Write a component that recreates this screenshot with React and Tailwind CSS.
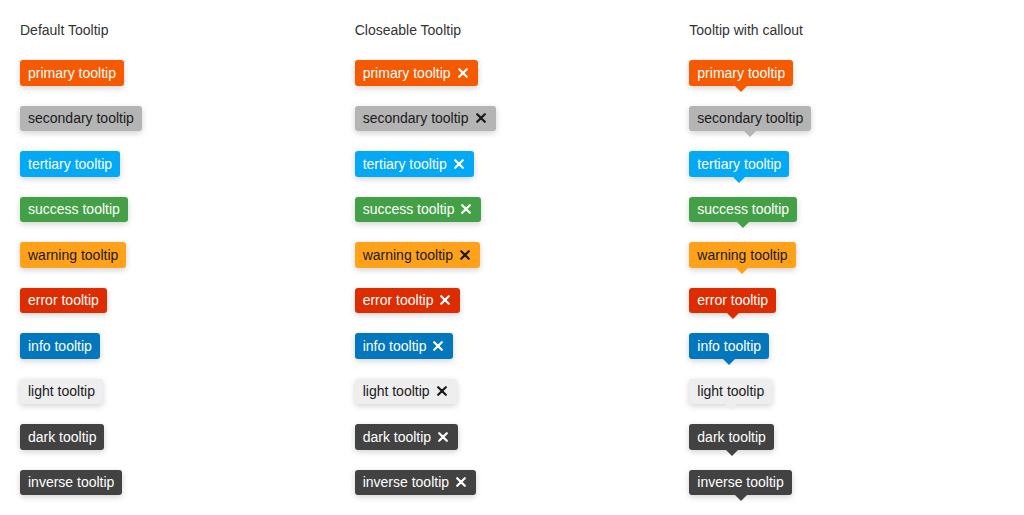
const variants = [
  { name: 'primary', bg: 'bg-[#f55a00]', text: 'text-white', arrow: 'border-t-[#f55a00]' },
  { name: 'secondary', bg: 'bg-[#b4b4b4]', text: 'text-[#1a1a1a]', arrow: 'border-t-[#b4b4b4]' },
  { name: 'tertiary', bg: 'bg-[#03a9f4]', text: 'text-white', arrow: 'border-t-[#03a9f4]' },
  { name: 'success', bg: 'bg-[#43a047]', text: 'text-white', arrow: 'border-t-[#43a047]' },
  { name: 'warning', bg: 'bg-[#ffa21a]', text: 'text-[#1a1a1a]', arrow: 'border-t-[#ffa21a]' },
  { name: 'error', bg: 'bg-[#dd2c00]', text: 'text-white', arrow: 'border-t-[#dd2c00]' },
  { name: 'info', bg: 'bg-[#0277bd]', text: 'text-white', arrow: 'border-t-[#0277bd]' },
  { name: 'light', bg: 'bg-[#eeeeee]', text: 'text-[#1a1a1a]', arrow: 'border-t-[#eeeeee]' },
  { name: 'dark', bg: 'bg-[#424242]', text: 'text-white', arrow: 'border-t-[#424242]' },
  { name: 'inverse', bg: 'bg-[#424242]', text: 'text-white', arrow: 'border-t-[#424242]' },
];

// small bold close cross
const CloseIcon = () => (
  <svg width="10" height="10" viewBox="0 0 10 10" className="ml-[7px] -mt-[1px] shrink-0">
    <path d="M1.2 1.2 L8.8 8.8 M8.8 1.2 L1.2 8.8" stroke="currentColor" strokeWidth="2.2" strokeLinecap="round" />
  </svg>
);

const Tooltip = ({ v, closeable, callout }) => (
  <div className="relative self-start">
    <div
      className={`flex items-center rounded-[3px] pl-2 pt-[4.5px] pb-[3.5px] text-sm leading-[17.5px] shadow-[0_2px_6px_rgba(0,0,0,0.18)] ${closeable ? 'pr-[10px]' : 'pr-2'} ${v.bg} ${v.text}`}
    >
      <span>{v.name} tooltip</span>
      {closeable && <CloseIcon />}
    </div>
    {callout && (
      <div
        className={`absolute left-1/2 top-full h-0 w-0 -translate-x-1/2 border-x-[6px] border-t-[6px] border-x-transparent ${v.arrow}`}
      />
    )}
  </div>
);

const Column = ({ title, closeable, callout }) => (
  <div className="flex flex-col">
    <h3 className="mb-5 text-sm leading-5 text-[#333333]">{title}</h3>
    <div className="flex flex-col gap-5">
      {variants.map((v) => (
        <Tooltip key={v.name} v={v} closeable={closeable} callout={callout} />
      ))}
    </div>
  </div>
);

const App = () => {
  return (
    <div
      className="grid min-h-[515px] grid-cols-3 bg-white pl-5 pt-5"
      style={{ fontFamily: '"Liberation Sans", Arial, sans-serif' }}
    >
      <Column title="Default Tooltip" />
      <Column title="Closeable Tooltip" closeable />
      <Column title="Tooltip with callout" callout />
    </div>
  );
};

export default App;
